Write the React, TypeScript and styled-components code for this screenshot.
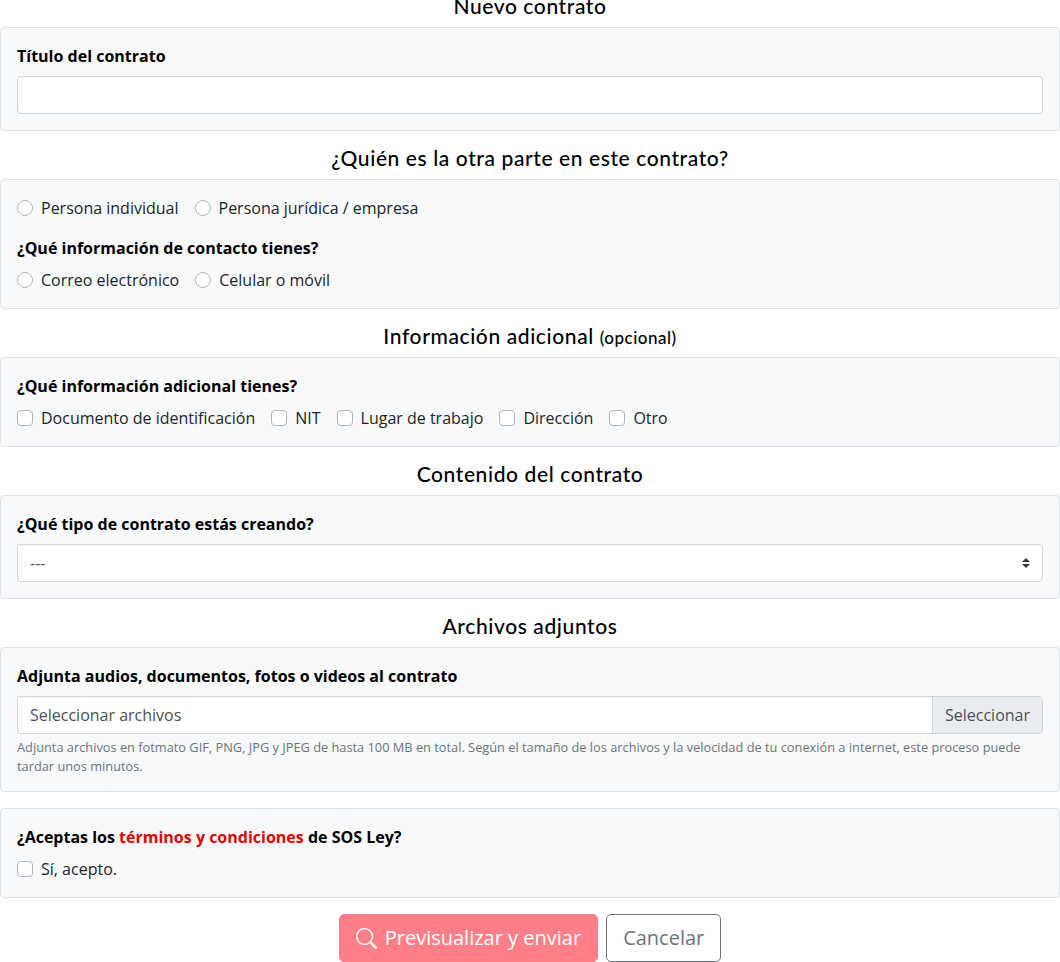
import React from "react";
import styled, { createGlobalStyle } from "styled-components";

const Global = createGlobalStyle`
  html, body { margin: 0; padding: 0; background: #fff; }
  body { font-family: "Open Sans", "Liberation Sans", sans-serif; font-size: 16px; line-height: 24px; color: #212529; overflow: hidden; }
  * { box-sizing: border-box; }
`;

const Page = styled.form`
  margin-top: -5px;
  display: flex;
  flex-direction: column;
`;

const Heading = styled.h2`
  margin: 0 0 8px;
  font-family: Lato, "Open Sans", sans-serif;
  font-weight: 500;
  font-size: 21px;
  line-height: 22px;
  padding-bottom: 2px;
  letter-spacing: 0.6px;
  color: #000;
  text-align: center;
`;

const Small = styled.small`
  font-size: 17px;
  line-height: 1;
  letter-spacing: 0.5px;
`;

const Panel = styled.section`
  background: #f8f9fa;
  border: 1px solid #dee2e6;
  border-radius: 4px;
  padding: 16px;
  margin-bottom: 16px;
`;

const Label = styled.div`
  font-weight: 700;
  color: #000;
  margin-bottom: 8px;
  font-size: 16px;
  line-height: 24px;
`;

const TermsLink = styled.a`
  color: #e60000;
  text-decoration: none;
`;

const TextInput = styled.input`
  display: block;
  width: 100%;
  height: 38px;
  background: #fff;
  border: 1px solid #ced4da;
  border-radius: 4px;
  padding: 6px 12px;
  font: inherit;
`;

const Select = styled.select`
  display: block;
  width: 100%;
  height: 38px;
  appearance: none;
  border: 1px solid #ced4da;
  border-radius: 4px;
  padding: 6px 36px 6px 12px;
  font: inherit;
  color: #495057;
  background: #fff url("data:image/svg+xml,%3csvg xmlns='http://www.w3.org/2000/svg' viewBox='0 0 4 5'%3e%3cpath fill='%23343a40' d='M2 0L0 2h4zm0 5L0 3h4z'/%3e%3c/svg%3e") no-repeat right 12px center / 8px 10px;
`;

const Options = styled.div<{ $spaced?: boolean }>`
  display: flex;
  gap: 16px;
  margin-bottom: ${(p) => (p.$spaced ? "16px" : "0")};
`;

const Option = styled.label`
  display: flex;
  align-items: center;
  gap: 8px;
  height: 24px;
  white-space: nowrap;
`;

const Control = styled.input<{ $round?: boolean }>`
  appearance: none;
  margin: 0;
  width: 16px;
  height: 16px;
  flex: none;
  background: #fff;
  border: 1px solid #adb5bd;
  border-radius: ${(p) => (p.$round ? "50%" : "4px")};
`;

const FileGroup = styled.div`
  display: flex;
  height: 38px;
  border: 1px solid #ced4da;
  border-radius: 4px;
  background: #fff;
  overflow: hidden;
`;

const FileName = styled.div`
  flex: 1;
  padding: 6px 12px;
  line-height: 24px;
  color: #495057;
`;

const FileButton = styled.div`
  padding: 6px 12px;
  line-height: 24px;
  color: #495057;
  background: #e9ecef;
  border-left: 1px solid #ced4da;
`;

const Help = styled.p`
  margin: 4px 0 0;
  font-size: 12.8px;
  line-height: 18.5px;
  color: #6c757d;
`;

const Actions = styled.div`
  display: flex;
  justify-content: center;
  gap: 8px;
`;

const Button = styled.button<{ $primary?: boolean }>`
  display: flex;
  align-items: center;
  gap: 8px;
  height: 48px;
  padding: 8px 16px;
  font: inherit;
  font-size: 20px;
  line-height: 30px;
  border-radius: 5px;
  background: ${(p) => (p.$primary ? "#ff7f89" : "#fff")};
  color: ${(p) => (p.$primary ? "#fff" : "#6c757d")};
  border: 1px solid ${(p) => (p.$primary ? "#ff7f89" : "#6c757d")};
`;

const SearchIcon = () => (
  <svg width="21" height="21" viewBox="0 0 16 16" fill="currentColor" aria-hidden="true">
    <path d="M11.742 10.344a6.5 6.5 0 1 0-1.397 1.398h-.001c.03.04.062.078.098.115l3.85 3.85a1 1 0 0 0 1.415-1.414l-3.85-3.85a1.007 1.007 0 0 0-.115-.1zM12 6.5a5.5 5.5 0 1 1-11 0 5.5 5.5 0 0 1 11 0z" />
  </svg>
);

export default function App() {
  return (
    <>
      <Global />
      <Page>
        <Heading>Nuevo contrato</Heading>
        <Panel>
          <Label>Título del contrato</Label>
          <TextInput type="text" />
        </Panel>

        <Heading>¿Quién es la otra parte en este contrato?</Heading>
        <Panel>
          <Options $spaced>
            <Option><Control type="radio" name="party" $round />Persona individual</Option>
            <Option><Control type="radio" name="party" $round />Persona jurídica / empresa</Option>
          </Options>
          <Label>¿Qué información de contacto tienes?</Label>
          <Options>
            <Option><Control type="radio" name="contact" $round />Correo electrónico</Option>
            <Option><Control type="radio" name="contact" $round />Celular o móvil</Option>
          </Options>
        </Panel>

        <Heading>Información adicional <Small>(opcional)</Small></Heading>
        <Panel>
          <Label>¿Qué información adicional tienes?</Label>
          <Options>
            <Option><Control type="checkbox" />Documento de identificación</Option>
            <Option><Control type="checkbox" />NIT</Option>
            <Option><Control type="checkbox" />Lugar de trabajo</Option>
            <Option><Control type="checkbox" />Dirección</Option>
            <Option><Control type="checkbox" />Otro</Option>
          </Options>
        </Panel>

        <Heading>Contenido del contrato</Heading>
        <Panel>
          <Label>¿Qué tipo de contrato estás creando?</Label>
          <Select defaultValue="">
            <option value="">---</option>
          </Select>
        </Panel>

        <Heading>Archivos adjuntos</Heading>
        <Panel>
          <Label>Adjunta audios, documentos, fotos o videos al contrato</Label>
          <FileGroup>
            <FileName>Seleccionar archivos</FileName>
            <FileButton>Seleccionar</FileButton>
          </FileGroup>
          <Help>
            Adjunta archivos en fotmato GIF, PNG, JPG y JPEG de hasta 100 MB en total. Según el tamaño de los archivos y la velocidad de tu conexión a internet, este proceso puede tardar unos minutos.
          </Help>
        </Panel>

        <Panel>
          <Label>¿Aceptas los <TermsLink href="#">términos y condiciones</TermsLink> de SOS Ley?</Label>
          <Options>
            <Option><Control type="checkbox" />Sí, acepto.</Option>
          </Options>
        </Panel>

        <Actions>
          <Button type="button" $primary><SearchIcon />Previsualizar y enviar</Button>
          <Button type="button">Cancelar</Button>
        </Actions>
      </Page>
    </>
  );
}
